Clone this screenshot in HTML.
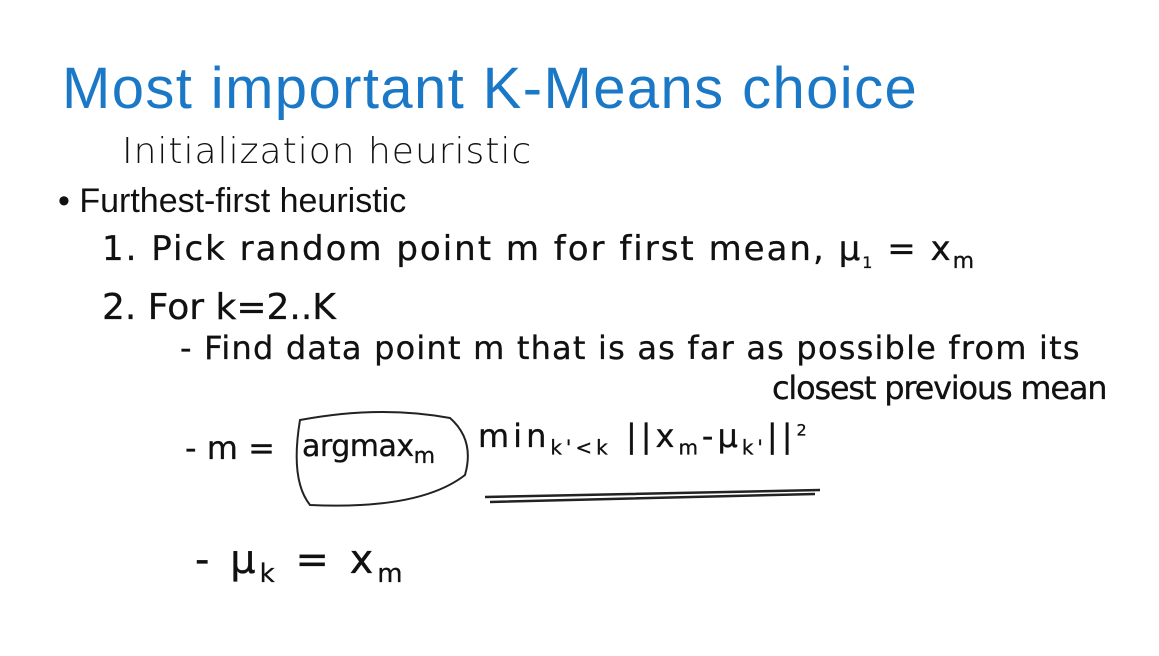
<!DOCTYPE html>
<html><head><meta charset="utf-8"><style>
body{margin:0;width:1159px;height:656px;background:#fff;position:relative;overflow:hidden;font-family:"Liberation Sans",sans-serif}
.t{position:absolute;white-space:nowrap;line-height:1}
.h{color:#111;font-family:"DejaVu Sans","Liberation Sans",sans-serif;font-weight:normal;-webkit-text-stroke:0.3px #111}
</style></head><body>
<div class="t" style="left:62px;top:60px;font-size:58px;color:#1b78c6;letter-spacing:1.4px">Most important K-Means choice</div>
<div class="t h" style="left:122px;top:134px;font-size:36px;font-weight:200;letter-spacing:1px;-webkit-text-stroke:0">Initialization heuristic</div>
<div class="t" style="left:58px;top:184px;font-size:34px;color:#111">• Furthest-first heuristic</div>
<div class="t h" style="left:102px;top:232px;font-size:34px;letter-spacing:2px">1. Pick random point m for first mean, μ<sub style="font-size:16px">1</sub> = x<sub style="font-size:22px">m</sub></div>
<div class="t h" style="left:102px;top:290px;font-size:36px">2. For k=2..K</div>
<div class="t h" style="left:180px;top:332px;font-size:32px;letter-spacing:1.2px">- Find data point m that is as far as possible from its</div>
<div class="t h" style="left:772px;top:372px;font-size:32px;letter-spacing:-1.2px">closest previous mean</div>
<div class="t h" style="left:185px;top:432px;font-size:32px">- m =</div>
<div class="t h" style="left:302px;top:432px;font-size:30px;letter-spacing:-0.5px">argmax<sub style="font-size:22px">m</sub></div>
<div class="t h" style="left:478px;top:420px;font-size:32px;letter-spacing:4px">min<sub style="font-size:20px">k'&lt;k</sub> ||x<sub style="font-size:20px">m</sub>-μ<sub style="font-size:20px">k'</sub>||<sup style="font-size:16px">2</sup></div>
<div class="t h" style="left:195px;top:540px;font-size:40px;letter-spacing:4px">- μ<sub style="font-size:26px">k</sub> = x<sub style="font-size:26px">m</sub></div>
<svg style="position:absolute;left:0;top:0" width="1159" height="656">
<path d="M300 420 Q380 405 450 418 Q475 440 465 475 Q420 510 310 505 Q290 480 300 420 Z" fill="none" stroke="#222" stroke-width="2"/>
<path d="M485 497 L820 490 M490 502 L815 494" stroke="#222" stroke-width="2.5" fill="none"/>
</svg>
</body></html>
